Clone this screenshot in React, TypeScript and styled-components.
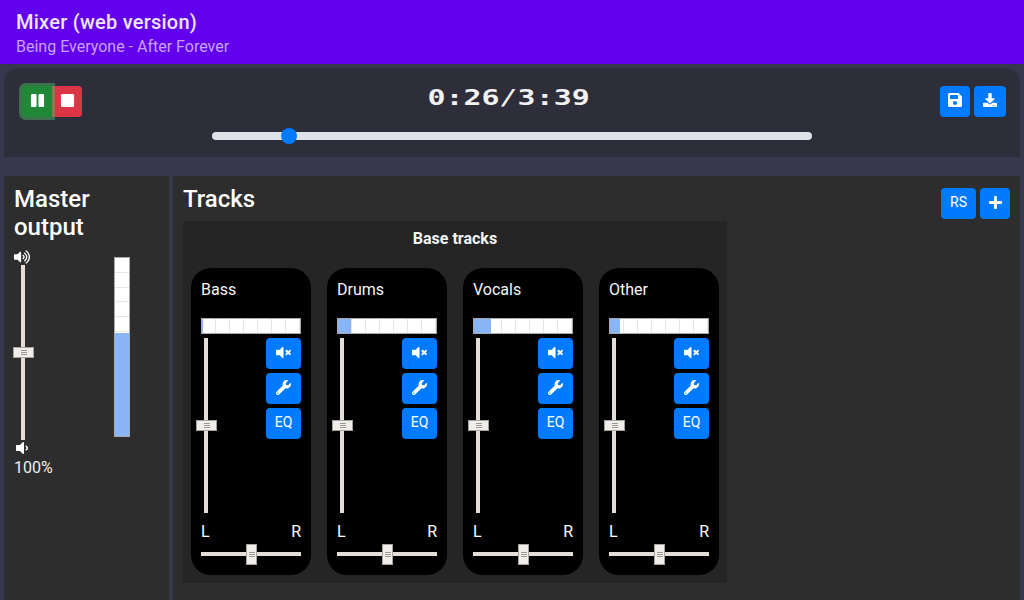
import React from "react";
import styled, { createGlobalStyle } from "styled-components";
import { FaDownload, FaPause, FaPlus, FaSave, FaStop, FaVolumeDown, FaVolumeMute, FaVolumeUp, FaWrench } from "react-icons/fa";

const GlobalStyle = createGlobalStyle`
    html, body {
        margin: 0;
        height: 600px;
        overflow: hidden;
        background: #37374d;
        font-family: Roboto, "Liberation Sans", sans-serif;
        color: #fff;
    }
    * {
        box-sizing: border-box;
    }
`;

const Page = styled.div`
    width: 1024px;
    height: 600px;
    display: flex;
    flex-direction: column;
    overflow: hidden;
`;

const Header = styled.header`
    height: 64px;
    background: #6200ee;
    padding: 10px 16px 0;
`;

const Title = styled.div`
    font-size: 20px;
    line-height: 24px;
    font-weight: 500;
    letter-spacing: 0.25px;
    color: #f0e4ff;
`;

const Subtitle = styled.div`
    font-size: 16px;
    line-height: 26px;
    color: #c9a2fb;
`;

const Transport = styled.section`
    margin: 4px 4px 0;
    height: 89px;
    background: #2e2e3a;
    border-radius: 16px 16px 0 0;
    padding: 18px 14px 0 18px;
    display: grid;
    grid-template-columns: 190px 600px 1fr;
`;

const ButtonRow = styled.div<{ $gap?: number }>`
    display: flex;
    gap: ${(p) => p.$gap ?? 0}px;
    justify-content: flex-start;
`;

const RightRow = styled(ButtonRow)`
    justify-content: flex-end;
`;

const Button = styled.button<{ $w?: number; $color?: string }>`
    width: ${(p) => p.$w ?? 30}px;
    height: 31px;
    border: 0;
    padding: 0 0 3px;
    border-radius: 4px;
    background: ${(p) => p.$color ?? "#007bff"};
    color: #fff;
    display: flex;
    align-items: center;
    justify-content: center;
    font: 400 14px Roboto, sans-serif;
    flex: none;
`;

const PlayButton = styled(Button)`
    border-radius: 4px 0 0 4px;
    box-shadow: 0 0 0 3px rgba(72, 180, 97, 0.5);
    position: relative;
    z-index: 1;
`;

const StopButton = styled(Button)`
    border-radius: 0 4px 4px 0;
`;

const Clock = styled.div`
    display: flex;
    flex-direction: column;
    align-items: center;
`;

const Time = styled.div`
    font-family: "DejaVu Sans Mono", monospace;
    font-weight: 700;
    font-size: 22px;
    line-height: 24px;
    height: 28px;
    margin-right: 6px;
    color: #f2f2f2;
    white-space: nowrap;
    transform: scaleX(1.36);
`;

const Slash = styled.span`
    font-weight: 400;
`;

const SeekTrack = styled.div`
    position: relative;
    width: 600px;
    height: 8px;
    margin-top: 18px;
    border-radius: 4px;
    background: #dee2e6;
`;

const SeekThumb = styled.div`
    position: absolute;
    top: -4px;
    width: 16px;
    height: 16px;
    border-radius: 50%;
    background: #007bff;
`;

const Workspace = styled.main`
    flex: 1;
    margin-top: 19px;
    padding: 0 4px;
    display: flex;
    gap: 4px;
    min-height: 0;
`;

const MasterPanel = styled.section`
    width: 165px;
    background: #2d2d2d;
    padding: 9px 10px 0;
`;

const Heading = styled.h2`
    margin: 0;
    font-size: 24px;
    line-height: 28px;
    font-weight: 500;
    color: #fff;
`;

const MasterBody = styled.div`
    display: flex;
    align-items: flex-start;
    margin-top: 8px;
`;

const VolumeColumn = styled.div`
    width: 18px;
    display: flex;
    flex-direction: column;
    align-items: flex-start;
    line-height: 0;
`;

const VolumeIcon = styled.span`
    height: 16px;
    display: flex;
    align-items: center;
`;

const VolumeRail = styled.div`
    padding-left: 7px;
`;

const Percent = styled.div`
    margin-top: 2px;
    font-size: 16px;
    line-height: 20px;
    color: #eee;
`;

const Rail = styled.div<{ $vertical?: boolean; $length: number }>`
    position: relative;
    flex: none;
    background: #e3dfd8;
    width: ${(p) => (p.$vertical ? "4px" : `${p.$length}px`)};
    height: ${(p) => (p.$vertical ? `${p.$length}px` : "4px")};
`;

const grip = "linear-gradient(#9c9890, #9c9890)";

const Handle = styled.div<{ $vertical?: boolean }>`
    position: absolute;
    width: ${(p) => (p.$vertical ? "21px" : "11px")};
    height: ${(p) => (p.$vertical ? "11px" : "21px")};
    left: ${(p) => (p.$vertical ? "-8px" : "auto")};
    top: ${(p) => (p.$vertical ? "auto" : "-8px")};
    border: 1px solid #a8a49c;
    background-color: #f0eeea;
    background-image: ${grip}, ${grip}, ${grip};
    background-repeat: no-repeat;
    background-size: 6px 1px;
    background-position: center calc(50% - 2px), center center, center calc(50% + 2px);
`;

const CellMeter = styled.div<{ $vertical?: boolean }>`
    position: relative;
    flex: none;
    display: flex;
    flex-direction: ${(p) => (p.$vertical ? "column" : "row")};
    width: ${(p) => (p.$vertical ? "16px" : "100px")};
    height: ${(p) => (p.$vertical ? "180px" : "16px")};
    border: 1px solid #aaa;
    background: #fff;
`;

const Cell = styled.div<{ $vertical?: boolean }>`
    flex: 1;
    border-style: solid;
    border-color: #e6e6e6;
    border-width: ${(p) => (p.$vertical ? "0 0 1px 0" : "0 1px 0 0")};
    &:last-child {
        border-width: 0;
    }
`;

const MeterFill = styled.div<{ $vertical?: boolean }>`
    position: absolute;
    left: 0;
    bottom: 0;
    background: #8ab4f8;
    ${(p) => (p.$vertical ? "width: 100%;" : "height: 100%;")}
`;

const MasterMeter = styled(CellMeter)`
    margin: 8px 0 0 82px;
`;

const TracksPanel = styled.section`
    flex: 1;
    background: #2d2d2d;
    padding: 9px 10px 0;
`;

const TracksHead = styled.div`
    display: flex;
    justify-content: space-between;
    height: 36px;
`;

const TracksButtons = styled(ButtonRow)`
    margin-top: 3px;
`;

const Group = styled.div`
    width: 544px;
    height: 362px;
    background: #252525;
    padding: 8px;
`;

const GroupTitle = styled.div`
    text-align: center;
    font-size: 16px;
    line-height: 20px;
    font-weight: 700;
    color: #f4f4f4;
`;

const Cards = styled.div`
    display: flex;
    gap: 16px;
    margin-top: 19px;
`;

const Card = styled.article`
    width: 120px;
    height: 307px;
    border-radius: 20px;
    background: #000;
    padding: 10px;
    display: flex;
    flex-direction: column;
`;

const TrackName = styled.div`
    font-size: 16px;
    line-height: 22px;
    padding-top: 1px;
    color: #f4f4f4;
    height: 40px;
`;

const Strip = styled.div`
    margin-top: 4px;
    height: 175px;
    display: flex;
    justify-content: space-between;
    padding-left: 3px;
`;

const StripButtons = styled.div`
    display: flex;
    flex-direction: column;
    gap: 4px;
`;

const PanLabels = styled.div`
    display: flex;
    justify-content: space-between;
    margin-top: 9px;
    font-size: 16px;
    line-height: 20px;
    color: #fff;
`;

const PanSlider = styled.div`
    margin-top: 10px;
`;

const cells = (n: number, vertical?: boolean) =>
    Array.from({ length: n }, (_, i) => <Cell key={i} $vertical={vertical} />);

const tracks = [
    { name: "Bass", level: 1 },
    { name: "Drums", level: 13 },
    { name: "Vocals", level: 17 },
    { name: "Other", level: 10 },
];

const App = () => {
    return (
        <Page>
            <GlobalStyle />
            <Header>
                <Title>Mixer (web version)</Title>
                <Subtitle>Being Everyone - After Forever</Subtitle>
            </Header>
            <Transport>
                <ButtonRow>
                    <PlayButton $color="#218838">
                        <FaPause size={15} />
                    </PlayButton>
                    <StopButton $color="#dc3545">
                        <FaStop size={15} />
                    </StopButton>
                </ButtonRow>
                <Clock>
                    <Time>
                        0:26<Slash>/</Slash>3:39
                    </Time>
                    <SeekTrack>
                        <SeekThumb style={{ left: 69 }} />
                    </SeekTrack>
                </Clock>
                <RightRow $gap={4}>
                    <Button>
                        <FaSave size={16} />
                    </Button>
                    <Button $w={32}>
                        <FaDownload size={14} />
                    </Button>
                </RightRow>
            </Transport>
            <Workspace>
                <MasterPanel>
                    <Heading>
                        Master
                        <br />
                        output
                    </Heading>
                    <MasterBody>
                        <VolumeColumn>
                            <VolumeIcon>
                                <FaVolumeUp size={16} />
                            </VolumeIcon>
                            <VolumeRail>
                                <Rail $vertical $length={175}>
                                    <Handle $vertical style={{ top: 82 }} />
                                </Rail>
                            </VolumeRail>
                            <VolumeIcon>
                                <FaVolumeDown size={16} />
                            </VolumeIcon>
                        </VolumeColumn>
                        <MasterMeter $vertical>
                            {cells(12, true)}
                            <MeterFill $vertical style={{ height: 103 }} />
                        </MasterMeter>
                    </MasterBody>
                    <Percent>100%</Percent>
                </MasterPanel>
                <TracksPanel>
                    <TracksHead>
                        <Heading>Tracks</Heading>
                        <TracksButtons $gap={4}>
                            <Button $w={35}>RS</Button>
                            <Button>
                                <FaPlus size={15} />
                            </Button>
                        </TracksButtons>
                    </TracksHead>
                    <Group>
                        <GroupTitle>Base tracks</GroupTitle>
                        <Cards>
                            {tracks.map((t) => (
                                <Card key={t.name}>
                                    <TrackName>{t.name}</TrackName>
                                    <CellMeter>
                                        {cells(7)}
                                        <MeterFill style={{ width: t.level }} />
                                    </CellMeter>
                                    <Strip>
                                        <Rail $vertical $length={175}>
                                            <Handle $vertical style={{ top: 82 }} />
                                        </Rail>
                                        <StripButtons>
                                            <Button $w={35}>
                                                <FaVolumeMute size={15} />
                                            </Button>
                                            <Button $w={35}>
                                                <FaWrench size={15} />
                                            </Button>
                                            <Button $w={35}>EQ</Button>
                                        </StripButtons>
                                    </Strip>
                                    <PanLabels>
                                        <span>L</span>
                                        <span>R</span>
                                    </PanLabels>
                                    <PanSlider>
                                        <Rail $length={100}>
                                            <Handle style={{ left: 45 }} />
                                        </Rail>
                                    </PanSlider>
                                </Card>
                            ))}
                        </Cards>
                    </Group>
                </TracksPanel>
            </Workspace>
        </Page>
    );
};

export default App;
